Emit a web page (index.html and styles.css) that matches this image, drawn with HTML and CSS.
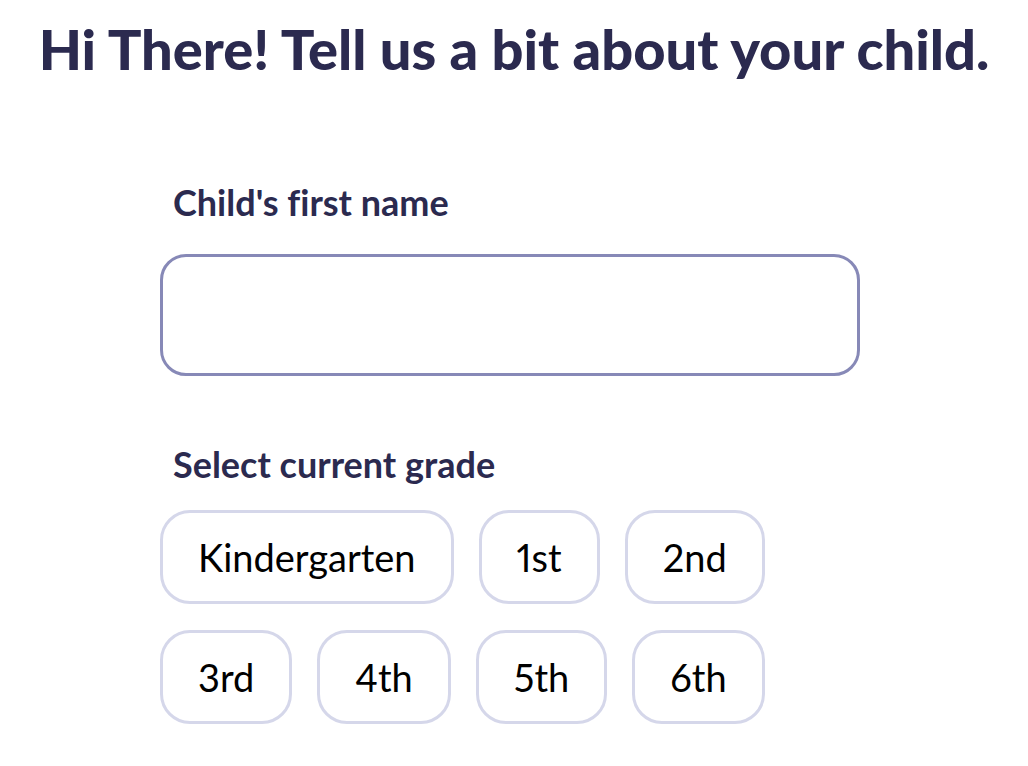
FILE: index.html
```html
<!DOCTYPE html>
<html lang="en">

<head>
	<title>child details</title>
	<meta charset="utf-8" />
	<meta name="viewport" content="width=device-width,initial-scale=1" />
	<link rel="stylesheet" href="styles.css">
</head>

<body>
	<h1 class="title">Hi There! Tell us a bit about your child.</h1>

	<form class="child-form">
		<label class="field-label" for="child-name">Child's first name</label>
		<input class="name-input" type="text" id="child-name">

		<div class="field-label grade-label">Select current grade</div>
		<div class="grades">
			<div class="grade-row">
				<button type="button" class="grade">Kindergarten</button>
				<button type="button" class="grade">1st</button>
				<button type="button" class="grade">2nd</button>
			</div>
			<div class="grade-row">
				<button type="button" class="grade">3rd</button>
				<button type="button" class="grade">4th</button>
				<button type="button" class="grade">5th</button>
				<button type="button" class="grade">6th</button>
			</div>
		</div>
	</form>
</body>

</html>
```

FILE: styles.css
```css
:root {
	--ink: #2b2a4f;
	--input-border: #8789b7;
	--grade-border: #d5d7ea;
	--gap: 25px;
}

*,
*:before,
*:after {
	box-sizing: border-box;
	margin: 0;
	padding: 0;
}

body {
	background: #fff;
	color: var(--ink);
	font-family: Lato, "Liberation Sans", sans-serif;
	font-variant-ligatures: none;
	padding-top: 19px;
}

.title {
	text-align: center;
	font-size: 56px;
	font-weight: 900;
	line-height: 60px;
}

.child-form {
	width: 700px;
	margin: 0 0 0 160px;
	padding-top: 103px;
	display: flex;
	flex-direction: column;
}

.field-label {
	display: block;
	padding-left: 13px;
	font-size: 36px;
	font-weight: 700;
	line-height: 40px;
}

.name-input {
	margin-top: 32px;
	height: 122px;
	border: 3px solid var(--input-border);
	border-radius: 26px;
	font: inherit;
	font-size: 32px;
	padding: 0 30px;
	outline: none;
}

.grade-label {
	margin-top: 68px;
}

.grades {
	margin-top: 26px;
	display: flex;
	flex-direction: column;
	gap: 26px;
}

.grade-row {
	display: flex;
	gap: var(--gap);
}

.grade {
	height: 94px;
	padding: 0 35px;
	border: 3px solid var(--grade-border);
	border-radius: 30px;
	background: #fff;
	color: #000;
	font-family: inherit;
	font-size: 38px;
	font-variant-numeric: proportional-nums;
	cursor: pointer;
}

.grade:hover {
	border-color: var(--input-border);
}
```
